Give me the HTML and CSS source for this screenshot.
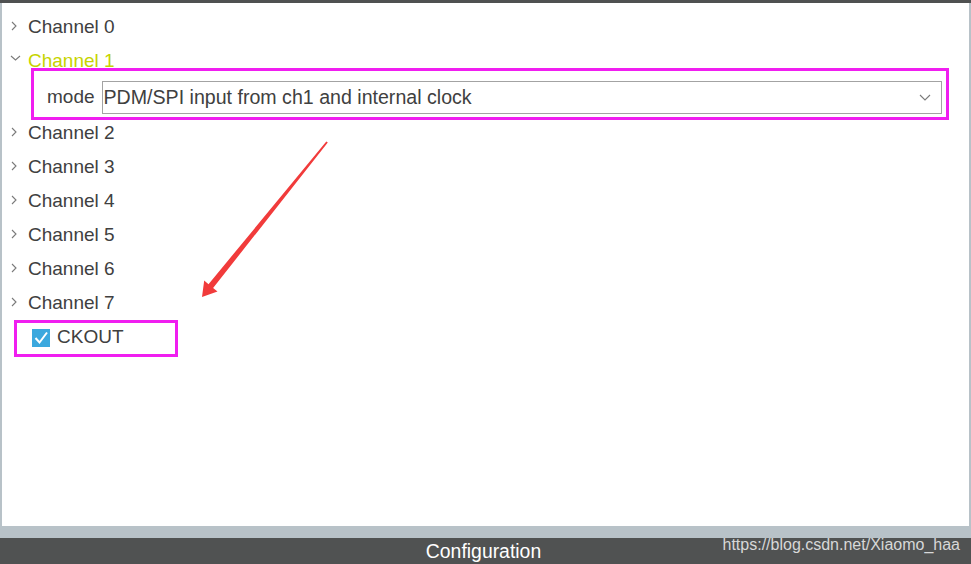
FILE: index.html
```html
<!DOCTYPE html>
<html lang="en">
<head>
    <meta charset="UTF-8">
    <meta name="viewport" content="width=device-width, initial-scale=1.0">
    <title>Configuration</title>
    <link rel="stylesheet" href="styles.css">
</head>
<body>
    <div class="window">
        <div class="top-bar"></div>

        <!-- Channel tree -->
        <div class="tree">
            <div class="row">
                <span class="toggle"><svg width="6" height="10" viewBox="0 0 6 10"><path d="M1 1 L5 5 L1 9" /></svg></span>
                <span class="label">Channel 0</span>
            </div>
            <div class="row">
                <span class="toggle open"><svg width="11" height="6" viewBox="0 0 11 6"><path d="M1 1 L5.5 5 L10 1" /></svg></span>
                <span class="label active">Channel 1</span>
            </div>
            <div class="mode-row">
                <span class="label">mode</span>
                <div class="select">
                    <span>PDM/SPI input from ch1 and internal clock</span>
                    <svg width="12" height="7" viewBox="0 0 12 7"><path d="M1 1 L6 6 L11 1" /></svg>
                </div>
            </div>
            <div class="row">
                <span class="toggle"><svg width="6" height="10" viewBox="0 0 6 10"><path d="M1 1 L5 5 L1 9" /></svg></span>
                <span class="label">Channel 2</span>
            </div>
            <div class="row">
                <span class="toggle"><svg width="6" height="10" viewBox="0 0 6 10"><path d="M1 1 L5 5 L1 9" /></svg></span>
                <span class="label">Channel 3</span>
            </div>
            <div class="row">
                <span class="toggle"><svg width="6" height="10" viewBox="0 0 6 10"><path d="M1 1 L5 5 L1 9" /></svg></span>
                <span class="label">Channel 4</span>
            </div>
            <div class="row">
                <span class="toggle"><svg width="6" height="10" viewBox="0 0 6 10"><path d="M1 1 L5 5 L1 9" /></svg></span>
                <span class="label">Channel 5</span>
            </div>
            <div class="row">
                <span class="toggle"><svg width="6" height="10" viewBox="0 0 6 10"><path d="M1 1 L5 5 L1 9" /></svg></span>
                <span class="label">Channel 6</span>
            </div>
            <div class="row">
                <span class="toggle"><svg width="6" height="10" viewBox="0 0 6 10"><path d="M1 1 L5 5 L1 9" /></svg></span>
                <span class="label">Channel 7</span>
            </div>
            <div class="check-row">
                <span class="checkbox"><svg width="18" height="18" viewBox="0 0 18 18"><path d="M3.5 9 L7.5 13.5 L15 3.5" /></svg></span>
                <span class="label">CKOUT</span>
            </div>
        </div>

        <div class="strip"></div>
        <div class="footer">Configuration</div>

        <!-- Annotations drawn over the screenshot -->
        <div class="mark mark-mode"></div>
        <div class="mark mark-ckout"></div>
        <svg class="arrow" width="971" height="564" viewBox="0 0 971 564">
            <polygon points="326.3,141.5 327.8,142.6 213.1,288 217.5,291.5 202,297 204.2,280.6 208.5,284.2" />
        </svg>
        <div class="watermark">https://blog.csdn.net/Xiaomo_haa</div>
    </div>
</body>
</html>
```

FILE: styles.css
```css
body {
    margin: 0;
    font-family: "Liberation Sans", Arial, sans-serif;
    background-color: #b8c2c8;
    overflow: hidden;
}
.window {
    position: relative;
    width: 971px;
    height: 564px;
    display: flex;
    flex-direction: column;
}
.top-bar {
    height: 3px;
    background-color: #4f5151;
}
.tree {
    height: 516px;
    margin: 0 2px;
    padding-top: 7px;
    background-color: #ffffff;
    display: flex;
    flex-direction: column;
}
.row {
    height: 34px;
    display: flex;
    align-items: center;
    padding-left: 9px;
}
.toggle {
    width: 17px;
    display: flex;
    align-items: center;
    margin-bottom: 3px;
}
.toggle path, .select path {
    fill: none;
    stroke: #7a7a7a;
    stroke-width: 1.1;
}
.toggle.open {
    margin-bottom: 6px;
    margin-left: -1px;
    width: 18px;
}
.label {
    font-size: 19px;
    line-height: 34px;
    color: #404040;
}
.label.active {
    color: #c6d400;
}
.mode-row {
    height: 38px;
    display: flex;
    align-items: center;
    gap: 7px;
    padding-left: 45px;
    padding-right: 27px;
}
.select {
    flex: 1;
    height: 31px;
    margin-top: 1px;
    border: 1px solid #a3a3a3;
    display: flex;
    align-items: center;
    justify-content: space-between;
    padding: 0 10px 0 1px;
    font-size: 19.6px;
    color: #404040;
}
.check-row {
    height: 34px;
    display: flex;
    align-items: center;
    gap: 7px;
    padding-left: 30px;
}
.checkbox {
    width: 18px;
    height: 18px;
    margin-top: 2px;
    background-color: #3ba8de;
    display: flex;
}
.checkbox path {
    fill: none;
    stroke: #ffffff;
    stroke-width: 2;
}
.strip {
    height: 12px;
}
.footer {
    height: 26px;
    background-color: #505252;
    color: #ffffff;
    font-size: 19.4px;
    line-height: 27px;
    text-align: center;
    padding-right: 4px;
}
.mark {
    position: absolute;
    border: 3px solid #f01ef0;
}
.mark-mode {
    left: 31px;
    top: 68px;
    width: 912px;
    height: 46px;
}
.mark-ckout {
    left: 14px;
    top: 320px;
    width: 158px;
    height: 31px;
}
.arrow {
    position: absolute;
    left: 0;
    top: 0;
}
.arrow polygon {
    fill: #f13b3b;
}
.watermark {
    position: absolute;
    right: 11px;
    top: 535px;
    font-size: 16px;
    line-height: 20px;
    color: rgba(255, 255, 255, 0.78);
}
```
